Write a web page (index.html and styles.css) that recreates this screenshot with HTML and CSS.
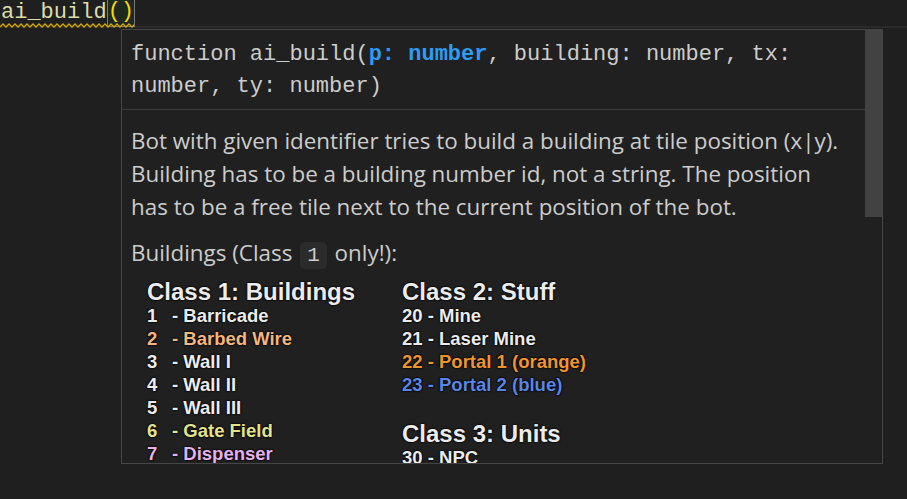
FILE: index.html
```html
<!DOCTYPE html>
<html>
<head>
<meta charset="utf-8">
<link rel="stylesheet" href="styles.css">
</head>
<body>
<div class="editor-line"><span class="fn">ai_build</span><span class="parens"><span class="paren">()</span></span><svg class="squiggle" width="134" height="5" viewBox="0 0 134 5"><polyline points="0,4 3,1 6,4 9,1 12,4 15,1 18,4 21,1 24,4 27,1 30,4 33,1 36,4 39,1 42,4 45,1 48,4 51,1 54,4 57,1 60,4 63,1 66,4 69,1 72,4 75,1 78,4 81,1 84,4 87,1 90,4 93,1 96,4 99,1 102,4 105,1 108,4 111,1 114,4 117,1 120,4 123,1 126,4 129,1 132,4 135,1" fill="none" stroke="#d4a800" stroke-width="1.3"/></svg></div>
<div class="hover">
  <div class="scrollbar"></div>
  <div class="signature">function ai_build(<b class="param">p: number</b>, building: number, tx:<br>number, ty: number)</div>
  <div class="doc">
    <p class="para">Bot with given identifier tries to build a building at tile position (x|y).<br>Building has to be a building number id, not a string. The position<br>has to be a free tile next to the current position of the bot.</p>
    <p class="para">Buildings (Class <code class="code">1</code> only!):</p>
    <div class="classes">
      <div class="col col-1">
        <div class="head">Class 1: Buildings</div>
        <div class="item"><span class="num">1</span>- Barricade</div>
        <div class="item peach"><span class="num">2</span>- Barbed Wire</div>
        <div class="item"><span class="num">3</span>- Wall I</div>
        <div class="item"><span class="num">4</span>- Wall II</div>
        <div class="item"><span class="num">5</span>- Wall III</div>
        <div class="item yellow"><span class="num">6</span>- Gate Field</div>
        <div class="item violet"><span class="num">7</span>- Dispenser</div>
      </div>
      <div class="col col-2">
        <div class="head">Class 2: Stuff</div>
        <div class="item">20 - Mine</div>
        <div class="item">21 - Laser Mine</div>
        <div class="item orange">22 - Portal 1 (orange)</div>
        <div class="item blue">23 - Portal 2 (blue)</div>
        <div class="head head-gap">Class 3: Units</div>
        <div class="item">30 - NPC</div>
      </div>
    </div>
  </div>
</div>
</body>
</html>
```
FILE: styles.css
```css
html, body {
  margin: 0;
  padding: 0;
}
body {
  background: #1f1f1f;
  width: 907px;
  height: 499px;
  overflow: hidden;
  font-family: "Liberation Mono", "DejaVu Sans Mono", monospace;
}
.editor-line {
  position: relative;
  height: 26px;
  border-bottom: 2px solid #2a2a2a;
  font-size: 22px;
  line-height: 26px;
  white-space: nowrap;
  padding-left: 1px;
}
.fn {
  color: #dcdcaa;
}
.parens {
  display: inline-block;
  box-sizing: border-box;
  height: 27px;
  vertical-align: top;
  border: 1px solid #7a7a7a;
  border-top: none;
  background: #1e2a1f;
  color: #ffd700;
}
.paren {
  position: relative;
  top: -1px;
}
.squiggle {
  position: absolute;
  left: 0;
  top: 23px;
}
.hover {
  position: relative;
  box-sizing: border-box;
  margin: 1px 0 0 121px;
  width: 762px;
  height: 435px;
  border: 1px solid #454545;
  background: #202020;
  overflow: hidden;
}
.scrollbar {
  position: absolute;
  right: 0;
  top: 0;
  width: 17px;
  height: 187px;
  background: #424242;
}
.signature {
  margin-right: 17px;
  padding: 9px 0 6px 9px;
  border-bottom: 1px solid #3c3c3c;
  color: #cccccc;
  font-size: 22px;
  line-height: 32px;
}
.param {
  color: #2c9cf5;
  font-weight: bold;
}
.doc {
  padding: 14px 0 0 9px;
  color: #cccccc;
  font-family: "Open Sans", "Noto Sans", sans-serif;
  font-size: 22.4px;
  line-height: 33px;
}
.para {
  margin: 0 0 13px 0;
  white-space: nowrap;
}
.code {
  font-family: "Liberation Mono", monospace;
  font-size: 21px;
  background: #2b2b2b;
  border-radius: 5px;
  padding: 2px 7px;
  margin: 0 2px;
}
.classes {
  display: flex;
  margin-top: -6px;
  padding-left: 16px;
  font-family: "Liberation Sans", Arial, sans-serif;
  font-weight: bold;
  color: #ececec;
  text-shadow: 0 0 2px #000, 0 0 2px #000, 0 0 1px #000;
}
.col-1 {
  width: 255px;
}
.head {
  font-size: 24px;
  line-height: 25px;
}
.head-gap {
  margin-top: 25px;
}
.item {
  font-size: 18.5px;
  line-height: 23px;
}
.num {
  display: inline-block;
  width: 25px;
}
.peach { color: #f4b67e; }
.yellow { color: #e4e48a; }
.violet { color: #e6b2ec; }
.orange { color: #f0952c; }
.blue { color: #5a86e6; }
```
